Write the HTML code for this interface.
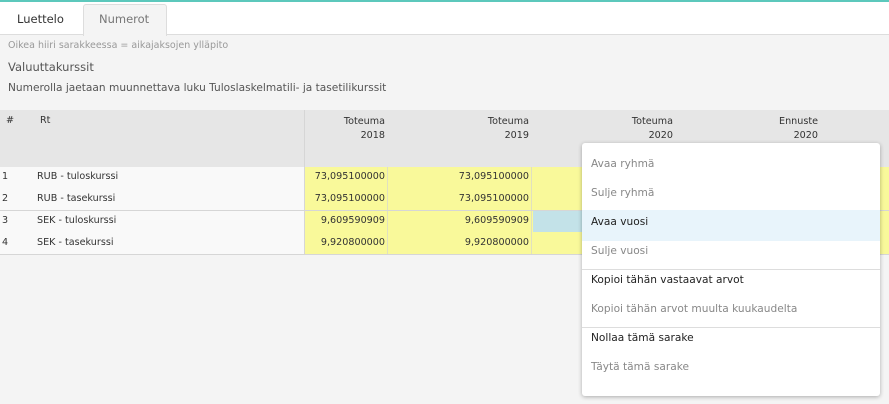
<!DOCTYPE html>
<html><head><meta charset="utf-8"><style>
*{margin:0;padding:0;box-sizing:border-box}
body{width:889px;height:404px;overflow:hidden;background:#f4f4f4;font-family:"DejaVu Sans","Liberation Sans",sans-serif;font-size:9.6px;color:#333;position:relative}
.a{position:absolute;white-space:nowrap}
.r{text-align:right}
</style></head><body>
<div class="a" style="left:0;top:0;width:889px;height:2px;background:#5cc8bc"></div>
<div class="a" style="left:0;top:2px;width:889px;height:33px;background:#fff;border-bottom:1px solid #ddd"></div>
<div class="a" style="left:17px;top:12px;font-size:11.5px;color:#333">Luettelo</div>
<div class="a" style="left:83px;top:4px;width:84px;height:32px;background:#f4f4f4;border:1px solid #ddd;border-bottom:none;border-radius:3px 3px 0 0"></div>
<div class="a" style="left:99px;top:12px;font-size:11.5px;color:#777">Numerot</div>
<div class="a" style="left:8px;top:40px;font-size:9.5px;color:#999">Oikea hiiri sarakkeessa = aikajaksojen ylläpito</div>
<div class="a" style="left:8px;top:60px;font-size:11.5px;color:#555">Valuuttakurssit</div>
<div class="a" style="left:8px;top:82px;font-size:10.6px;color:#555">Numerolla jaetaan muunnettava luku Tuloslaskelmatili- ja tasetilikurssit</div>
<div class="a" style="left:0;top:110px;width:889px;height:57px;background:#e6e6e6"></div>
<div class="a" style="left:304px;top:110px;width:1px;height:144px;background:#d6d6d6"></div>
<div class="a" style="left:6px;top:115px">#</div>
<div class="a" style="left:40px;top:115px">Rt</div>
<div class="a r" style="left:304px;top:115px;width:81px;line-height:14px">Toteuma<br>2018</div>
<div class="a r" style="left:387px;top:115px;width:142px;line-height:14px">Toteuma<br>2019</div>
<div class="a r" style="left:530px;top:115px;width:143px;line-height:14px">Toteuma<br>2020</div>
<div class="a r" style="left:675px;top:115px;width:143px;line-height:14px">Ennuste<br>2020</div>
<div class="a" style="left:0;top:167px;width:304px;height:87px;background:#f9f9f9"></div>
<div class="a" style="left:305px;top:167px;width:584px;height:87px;background:#f9f99a"></div>
<div class="a" style="left:387px;top:167px;width:1px;height:87px;background:#e0e0c0"></div>
<div class="a" style="left:531px;top:167px;width:1px;height:87px;background:#e0e0c0"></div>
<div class="a" style="left:0;top:210px;width:889px;height:1px;background:#d6d6d6"></div>
<div class="a" style="left:0;top:254px;width:889px;height:1px;background:#d6d6d6"></div>
<div class="a" style="left:533px;top:211px;width:50px;height:21px;background:#c3e2e8"></div>
<div class="a" style="left:2px;top:171px">1</div><div class="a" style="left:37px;top:171px">RUB - tuloskurssi</div>
<div class="a" style="left:2px;top:193px">2</div><div class="a" style="left:37px;top:193px">RUB - tasekurssi</div>
<div class="a" style="left:2px;top:215px">3</div><div class="a" style="left:37px;top:215px">SEK - tuloskurssi</div>
<div class="a" style="left:2px;top:237px">4</div><div class="a" style="left:37px;top:237px">SEK - tasekurssi</div>
<div class="a r" style="left:304px;top:171px;width:81px">73,095100000</div>
<div class="a r" style="left:304px;top:193px;width:81px">73,095100000</div>
<div class="a r" style="left:304px;top:215px;width:81px">9,609590909</div>
<div class="a r" style="left:304px;top:237px;width:81px">9,920800000</div>
<div class="a r" style="left:387px;top:171px;width:142px">73,095100000</div>
<div class="a r" style="left:387px;top:193px;width:142px">73,095100000</div>
<div class="a r" style="left:387px;top:215px;width:142px">9,609590909</div>
<div class="a r" style="left:387px;top:237px;width:142px">9,920800000</div>
<div class="a" style="left:582px;top:143px;width:298px;height:253px;background:#fff;border-radius:3px;box-shadow:0 1px 4px rgba(0,0,0,.3);font-size:10.6px;color:#888">
<div class="a" style="left:0;top:67px;width:298px;height:31px;background:#e8f4fb"></div>
<div class="a" style="left:0;top:126px;width:298px;height:1px;background:#ddd"></div>
<div class="a" style="left:0;top:184px;width:298px;height:1px;background:#ddd"></div>
<div class="a" style="left:9px;top:15px">Avaa ryhmä</div>
<div class="a" style="left:9px;top:44px">Sulje ryhmä</div>
<div class="a" style="left:9px;top:73px;color:#222">Avaa vuosi</div>
<div class="a" style="left:9px;top:102px">Sulje vuosi</div>
<div class="a" style="left:9px;top:131px;color:#222">Kopioi tähän vastaavat arvot</div>
<div class="a" style="left:9px;top:160px">Kopioi tähän arvot muulta kuukaudelta</div>
<div class="a" style="left:9px;top:189px;color:#222">Nollaa tämä sarake</div>
<div class="a" style="left:9px;top:218px">Täytä tämä sarake</div>
</div>
</body></html>
